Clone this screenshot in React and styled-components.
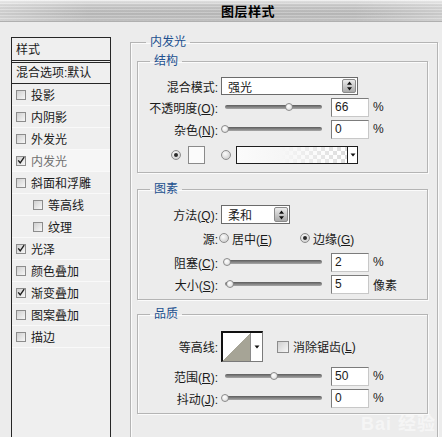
import React from 'react';
import styled, { createGlobalStyle } from 'styled-components';

const GlobalStyle = createGlobalStyle`
  html, body { margin: 0; padding: 0; background: #ececec; }
  body {
    font-family: "Liberation Sans", "Noto Sans CJK SC", sans-serif;
    font-size: 12px;
    color: #1a1a1a;
  }
  * { box-sizing: border-box; }
`;

const Window = styled.div`
  position: relative;
  width: 442px;
  height: 437px;
  overflow: hidden;
  background: #ececec;
`;

const TitleBar = styled.div`
  height: 22px;
  display: flex;
  align-items: center;
  justify-content: center;
  padding-left: 54px;
  font-size: 13px;
  font-weight: bold;
  color: #000;
  letter-spacing: 0.5px;
  background:
    repeating-linear-gradient(180deg, rgba(255,255,255,0.18) 0 1px, rgba(0,0,0,0.04) 1px 3px),
    linear-gradient(90deg, rgba(255,255,255,0.35), rgba(255,255,255,0) 20%, rgba(255,255,255,0) 80%, rgba(255,255,255,0.3)),
    linear-gradient(180deg, #f0f0f0 0%, #cdcdcd 25%, #bcbcbc 65%, #c9c9c9 100%);
  border-bottom: 1px solid #b0b0b0;
`;

const Body = styled.div`
  display: flex;
  align-items: flex-start;
  padding: 15px 0 0 11px;
`;

const LeftPanel = styled.div`
  width: 100px;
  height: 420px;
  flex-shrink: 0;
  border: 1px solid #262626;
  background: #efefef;
`;

const ListHeader = styled.div`
  height: 25px;
  padding: 4px 0 0 4px;
  border-bottom: 3px double #262626;
  line-height: 16px;
`;

const BlendRow = styled.div`
  height: 21px;
  padding: 2px 0 0 4px;
  line-height: 16px;
  border-bottom: 1px solid #262626;
  white-space: nowrap;
`;

const ListItem = styled.div`
  display: flex;
  align-items: center;
  height: 22px;
  padding-left: ${p => (p.$nested ? 21 : 4)}px;
  border-bottom: 1px solid #f9f9f9;
  background: ${p => (p.$selected ? '#f6f6f6' : 'transparent')};
  color: ${p => (p.$selected ? '#707070' : '#1a1a1a')};
  white-space: nowrap;
`;

const CheckBox = styled.span`
  width: ${p => p.$size || 10}px;
  height: ${p => p.$size || 10}px;
  flex-shrink: 0;
  border: 1px solid #8c8c8c;
  background: linear-gradient(135deg, #cfcfcf, #f7f7f7);
  display: flex;
  align-items: center;
  justify-content: center;
  margin-right: ${p => p.$gap || 5}px;
`;

const Check = ({ checked, size, gap }) => (
  <CheckBox $size={size} $gap={gap}>
    {checked && (
      <svg width="10" height="10" viewBox="0 0 10 10" style={{ marginTop: -2 }}>
        <path d="M1.5 5.5 L4 8.5 L9 1.5" fill="none" stroke="#1c1c1c" strokeWidth="1.7" />
      </svg>
    )}
  </CheckBox>
);

const MainGroup = styled.fieldset`
  margin: -1px 0 0 19px;
  padding: 7px 9px 0 6px;
  width: 308px;
  height: 420px;
  flex-shrink: 0;
  min-width: 0;
  border: 1px solid #b4b4b4;
  box-shadow: inset 1px 1px 0 #fbfbfb, 1px 1px 0 #fbfbfb;
`;

const Legend = styled.legend`
  margin-left: ${p => p.$offset || 12}px;
  padding: 0 4px;
  font-size: 12px;
  line-height: 12px;
  color: #22508f;
`;

const SubGroup = styled.fieldset`
  margin: ${p => p.$top || 0}px 0 0 0;
  padding: ${p => p.$padTop || 10}px 0 ${p => p.$padBottom || 4}px 0;
  min-width: 0;
  width: 291px;
  border: 1px solid #b4b4b4;
  box-shadow: inset 1px 1px 0 #fbfbfb, 1px 1px 0 #fbfbfb;
`;

const Row = styled.div`
  display: flex;
  align-items: center;
  height: ${p => p.$h || 22}px;
  margin-top: ${p => p.$mt || 0}px;
  padding-left: ${p => p.$pl || 0}px;
  white-space: nowrap;
`;

const Label = styled.span`
  width: 80px;
  flex-shrink: 0;
  text-align: right;
  white-space: nowrap;
`;

const Select = styled.div`
  margin-left: 3px;
  width: ${p => p.$w}px;
  height: ${p => p.$h || 18}px;
  border: 1px solid #6b6b6b;
  background: #fff;
  display: flex;
  align-items: center;
  justify-content: space-between;
  padding: 1px 1px 1px 6px;
`;

const Stepper = styled.span`
  width: 14px;
  height: 100%;
  border: 1px solid #8a8a8a;
  border-radius: 2px;
  background: linear-gradient(180deg, #ececec, #a9a9a9);
  display: flex;
  align-items: center;
  justify-content: center;
`;

const StepIcon = () => (
  <svg width="7" height="10" viewBox="0 0 7 10">
    <path d="M3.5 0.5 L6 3.8 L1 3.8 Z M3.5 9.5 L6 6.2 L1 6.2 Z" fill="#111" />
  </svg>
);

const Slider = styled.div`
  position: relative;
  margin-left: 7px;
  width: 97px;
  height: 10px;
  display: flex;
  align-items: center;
`;

const Track = styled.div`
  width: 100%;
  height: 4px;
  border-radius: 2px;
  background: linear-gradient(180deg, #5c5c5c, #a8a8a8);
`;

const Thumb = styled.span`
  position: absolute;
  top: 1px;
  width: 8px;
  height: 8px;
  border-radius: 50%;
  border: 1px solid #8a8a8a;
  background: radial-gradient(circle at 40% 35%, #ffffff, #d6d6d6);
`;

const NumBox = styled.div`
  margin-left: 9px;
  width: 38px;
  height: 19px;
  border: 1px solid #7c7c7c;
  border-right-color: #c8c8c8;
  border-bottom-color: #c8c8c8;
  background: #fff;
  padding-left: 3px;
  line-height: 17px;
  font-size: 12px;
`;

const Unit = styled.span`
  margin-left: 4px;
`;

const RadioDot = styled.span`
  width: 10px;
  height: 10px;
  flex-shrink: 0;
  border-radius: 50%;
  border: 1px solid #8c8c8c;
  background: radial-gradient(circle at 40% 35%, #fbfbfb, #c4c4c4);
  display: flex;
  align-items: center;
  justify-content: center;
  margin-left: ${p => p.$ml || 0}px;
  &::after {
    content: '';
    width: 4px;
    height: 4px;
    border-radius: 50%;
    background: ${p => (p.$on ? '#2a2a2a' : 'transparent')};
  }
`;

const RadioText = styled.span`
  margin-left: 3px;
`;

const Swatch = styled.span`
  margin-left: 7px;
  width: 17px;
  height: 18px;
  border: 1px solid #8a8a8a;
  background: #fbfbfb;
`;

const GradientBox = styled.div`
  margin-left: 5px;
  width: 122px;
  height: 18px;
  border: 1px solid #1e1e1e;
  display: flex;
`;

const GradientFill = styled.div`
  flex: 1;
  background:
    linear-gradient(90deg, #fbfbfb 0%, #f6f6f6 40%, rgba(255,255,255,0) 100%),
    repeating-conic-gradient(#dcdcdc 0% 25%, #ffffff 0% 50%) 0 0 / 8px 8px;
`;

const DropPart = styled.span`
  width: ${p => p.$w || 10}px;
  flex-shrink: 0;
  border-left: 1px solid ${p => p.$line || '#1e1e1e'};
  background: #fff;
  display: flex;
  align-items: center;
  justify-content: center;
`;

const DownIcon = () => (
  <svg width="6" height="4" viewBox="0 0 6 4">
    <path d="M0.5 0.5 L5.5 0.5 L3 3.5 Z" fill="#111" />
  </svg>
);

const ContourBox = styled.div`
  margin-left: 3px;
  width: 42px;
  height: 31px;
  display: flex;
  border: 1px solid #7a7a7a;
  border-left: 2px solid #111;
  border-top: 2px solid #111;
  background: #fff;
`;

const ContourCurve = styled.div`
  flex: 1;
  background: linear-gradient(to top left, #a6a496 50%, #ffffff 50%);
`;

const AntiAlias = styled.label`
  display: flex;
  align-items: center;
  margin-left: 14px;
`;

const Watermark = styled.div`
  position: absolute;
  right: 6px;
  bottom: 2px;
  font-size: 18px;
  font-weight: bold;
  color: rgba(255, 255, 255, 0.5);
  letter-spacing: 1px;
  pointer-events: none;
`;

const Mn = ({ children }) => <u>{children}</u>;

const SliderRow = ({ label, pct, value, unit = '%', mt }) => (
  <Row $mt={mt}>
    <Label>{label}</Label>
    <Slider>
      <Track />
      <Thumb style={{ left: `${pct * 97 - 4}px` }} />
    </Slider>
    <NumBox>{value}</NumBox>
    <Unit>{unit}</Unit>
  </Row>
);

const items = [
  { t: '投影' },
  { t: '内阴影' },
  { t: '外发光' },
  { t: '内发光', checked: true, selected: true },
  { t: '斜面和浮雕' },
  { t: '等高线', nested: true },
  { t: '纹理', nested: true },
  { t: '光泽', checked: true },
  { t: '颜色叠加' },
  { t: '渐变叠加', checked: true },
  { t: '图案叠加' },
  { t: '描边' },
];

export default function App() {
  return (
    <Window>
      <GlobalStyle />
      <TitleBar>图层样式</TitleBar>
      <Body>
        <LeftPanel>
          <ListHeader>样式</ListHeader>
          <BlendRow>混合选项:默认</BlendRow>
          {items.map(it => (
            <ListItem key={it.t} $nested={it.nested} $selected={it.selected}>
              <Check checked={it.checked} />
              {it.t}
            </ListItem>
          ))}
        </LeftPanel>

        <MainGroup>
          <Legend $offset={9}>内发光</Legend>

          <SubGroup $padBottom={6}>
            <Legend>结构</Legend>
            <Row $h={18}>
              <Label>混合模式:</Label>
              <Select $w={137} $h={18}>
                强光
                <Stepper><StepIcon /></Stepper>
              </Select>
            </Row>
            <SliderRow mt={1} label={<>不透明度(<Mn>O</Mn>):</>} pct={0.66} value="66" />
            <SliderRow label={<>杂色(<Mn>N</Mn>):</>} pct={0} value="0" />
            <Row $mt={4} $pl={33}>
              <RadioDot $on />
              <Swatch />
              <RadioDot $ml={16} />
              <GradientBox>
                <GradientFill />
                <DropPart><DownIcon /></DropPart>
              </GradientBox>
            </Row>
          </SubGroup>

          <SubGroup $top={10}>
            <Legend>图素</Legend>
            <Row $h={19}>
              <Label>方法(<Mn>Q</Mn>):</Label>
              <Select $w={69} $h={19}>
                柔和
                <Stepper><StepIcon /></Stepper>
              </Select>
            </Row>
            <Row $h={20} $mt={4}>
              <Label>源:</Label>
              <RadioDot $ml={1} />
              <RadioText>居中(<Mn>E</Mn>)</RadioText>
              <RadioDot $ml={28} $on />
              <RadioText>边缘(<Mn>G</Mn>)</RadioText>
            </Row>
            <SliderRow mt={3} label={<>阻塞(<Mn>C</Mn>):</>} pct={0.02} value="2" />
            <SliderRow label={<>大小(<Mn>S</Mn>):</>} pct={0.05} value="5" unit="像素" />
          </SubGroup>

          <SubGroup $top={8} $padTop={11}>
            <Legend>品质</Legend>
            <Row $h={31}>
              <Label>等高线:</Label>
              <ContourBox>
                <ContourCurve />
                <DropPart $w={12} $line="#8a8a8a"><DownIcon /></DropPart>
              </ContourBox>
              <AntiAlias>
                <Check size={12} gap={4} />
                消除锯齿(<Mn>L</Mn>)
              </AntiAlias>
            </Row>
            <SliderRow mt={3} label={<>范围(<Mn>R</Mn>):</>} pct={0.5} value="50" />
            <SliderRow label={<>抖动(<Mn>J</Mn>):</>} pct={0} value="0" />
          </SubGroup>
        </MainGroup>
      </Body>
      <Watermark>Bai 经验</Watermark>
    </Window>
  );
}
